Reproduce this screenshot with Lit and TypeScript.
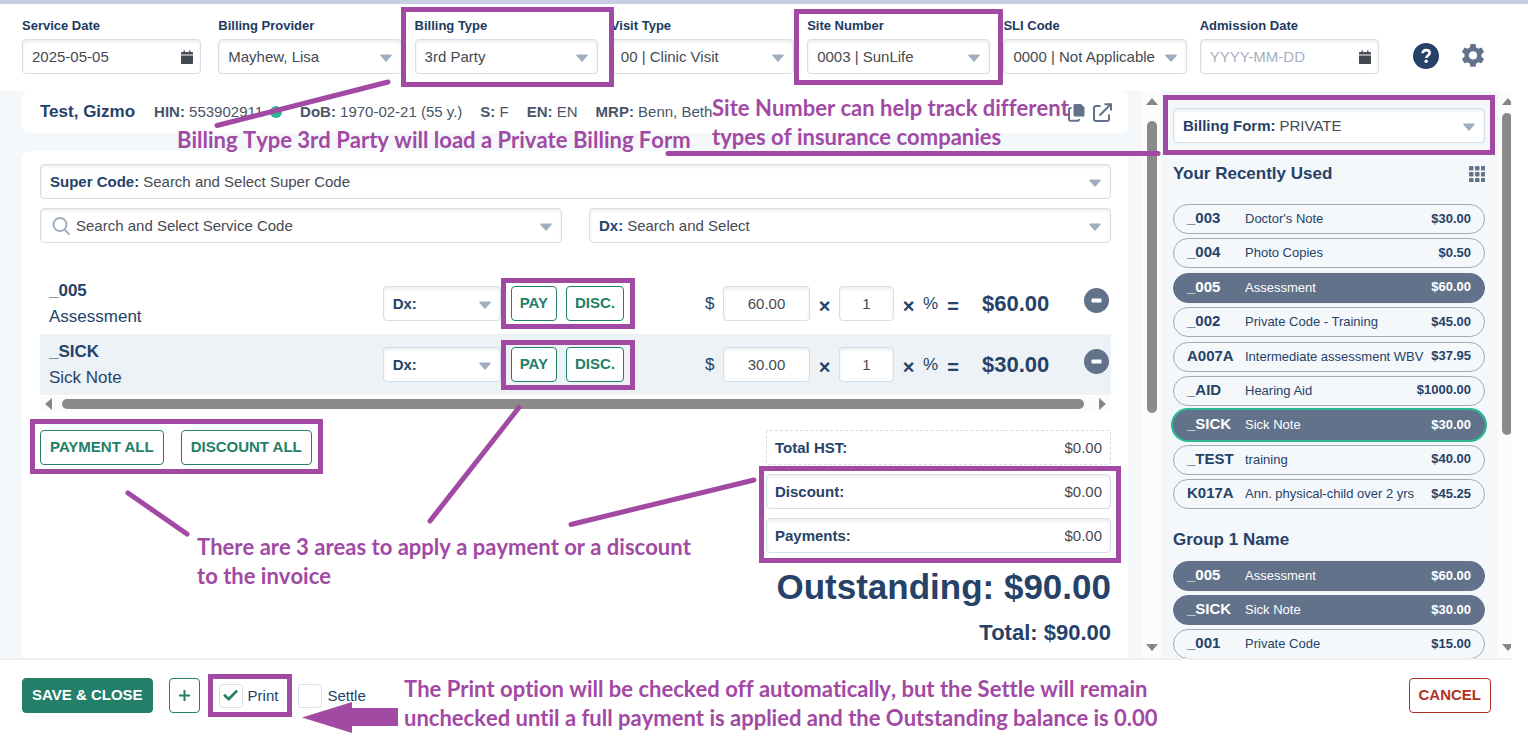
import { LitElement, html, css, svg } from "lit";
import { customElement, property } from "lit/decorators.js";
import { classMap } from "lit/directives/class-map.js";

const caret = html`<svg class="caret" viewBox="0 0 12 8" width="12" height="8" aria-hidden="true">
  <path d="M1 .5h10c.8 0 1.100.8.6 1.300L6.800 7.300c-.5.5-1.100.5-1.600 0L.4 1.800C-.1 1.300.2.500 1 .5z" fill="#a0aec0" />
</svg>`;

const calendar = html`<svg class="calendar" viewBox="0 0 12 14" width="12" height="14" aria-hidden="true">
  <path d="M2.500.5h1.500v1.500h4V.5h1.500v1.500H11c.6 0 1 .4 1 1v1.500H0V3c0-.6.4-1 1-1h1.500z" fill="#4a5058" />
  <path d="M0 5.500h12V13c0 .5-.4 1-1 1H1c-.6 0-1-.5-1-1z" fill="#42484f" />
</svg>`;

const control = css`
  * {
    box-sizing: border-box;
  }
  button,
  input,
  select {
    font: inherit;
    color: inherit;
    margin: 0;
  }
  .box {
    display: flex;
    align-items: center;
    gap: 4px;
    height: 35px;
    padding: 0 9px;
    background: #fff;
    border: 1px solid #d5dde7;
    border-radius: 4px;
    box-shadow: inset 0 2px 3px rgba(45, 55, 72, 0.09);
    color: #464a52;
    font-size: 15px;
    min-width: 0;
  }
  .box b,
  .box label {
    color: #264268;
    font-weight: 700;
    flex: none;
  }
  .box select,
  .box input {
    flex: 1;
    min-width: 0;
    width: 100%;
    height: 100%;
    padding: 0;
    border: 0;
    outline: 0;
    background: none;
    appearance: none;
  }
  .box input::placeholder {
    color: #a3afc0;
    opacity: 1;
  }
  .caret,
  .calendar {
    flex: none;
  }
  .caret {
    margin: 3px 0 0;
  }
`;

@customElement("header-field")
class HeaderField extends LitElement {
  @property() label = "";
  @property() value = "";
  @property() kind = "select";

  static styles = [
    control,
    css`
      :host {
        display: block;
        min-width: 0;
      }
      .name {
        display: block;
        font-size: 13px;
        font-weight: 700;
        line-height: 16px;
        margin-bottom: 5px;
        white-space: nowrap;
        color: #203a61;
      }
      .date {
        margin-right: 4px;
      }
      .date .calendar {
        margin-right: -2px;
      }
    `,
  ];

  render() {
    const date = this.kind === "date";
    return html`
      <label class="name" for="f">${this.label}</label>
      <div class=${classMap({ box: true, date })}>
        ${date
          ? html`<input id="f" type="text" placeholder="YYYY-MM-DD" .value=${this.value} />${calendar}`
          : html`<select id="f"><option>${this.value}</option></select>${caret}`}
      </div>
    `;
  }
}

@customElement("scroll-rail")
class ScrollRail extends LitElement {
  @property({ reflect: true }) axis = "y";
  @property({ type: Number }) size = 50;

  static styles = css`
    :host {
      display: flex;
      flex-direction: column;
      align-items: center;
      background: #fcfcfc;
      padding: 7px 4px;
      gap: 16px;
      box-sizing: border-box;
      overflow: hidden;
    }
    :host(.outer) {
      align-items: flex-start;
      gap: 8px;
    }
    :host([axis="x"]) {
      flex-direction: row;
      padding: 3px 5px;
      gap: 10px;
    }
    .track {
      flex: 1;
      width: 10px;
      min-height: 0;
    }
    :host([axis="x"]) .track {
      height: 10px;
      width: auto;
    }
    .thumb {
      background: #8a8a8a;
      border-radius: 5px;
      height: 100%;
      width: 100%;
    }
    svg {
      flex: none;
    }
  `;

  render() {
    const x = this.axis === "x";
    return html`
      <svg width=${x ? 7 : 12} height=${x ? 12 : 7} viewBox=${x ? "0 0 7 12" : "0 0 12 7"}>
        <path d=${x ? "M7 0v12L0 6z" : "M0 7h12L6 0z"} fill="#868686" />
      </svg>
      <div class="track">
        <div class="thumb" style=${x ? `width:${this.size}%` : `height:${this.size}%`}></div>
      </div>
      <svg width=${x ? 7 : 12} height=${x ? 12 : 7} viewBox=${x ? "0 0 7 12" : "0 0 12 7"}>
        <path d=${x ? "M0 0v12L7 6z" : "M0 0h12L6 7z"} fill="#868686" />
      </svg>
    `;
  }
}

interface Code {
  code: string;
  name: string;
  price: string;
  on?: boolean;
  focus?: boolean;
}

const recent: Code[] = [
  { code: "_003", name: "Doctor's Note", price: "$30.00" },
  { code: "_004", name: "Photo Copies", price: "$0.50" },
  { code: "_005", name: "Assessment", price: "$60.00", on: true },
  { code: "_002", name: "Private Code - Training", price: "$45.00" },
  { code: "A007A", name: "Intermediate assessment WBV", price: "$37.95" },
  { code: "_AID", name: "Hearing Aid", price: "$1000.00" },
  { code: "_SICK", name: "Sick Note", price: "$30.00", on: true, focus: true },
  { code: "_TEST", name: "training", price: "$40.00" },
  { code: "K017A", name: "Ann. physical-child over 2 yrs", price: "$45.25" },
];

const group: Code[] = [
  { code: "_005", name: "Assessment", price: "$60.00", on: true },
  { code: "_SICK", name: "Sick Note", price: "$30.00", on: true },
  { code: "_001", name: "Private Code", price: "$15.00" },
];

const lines = [
  { code: "_005", name: "Assessment", fee: "60.00", total: "$60.00" },
  { code: "_SICK", name: "Sick Note", fee: "30.00", total: "$30.00" },
];

@customElement("code-list")
class CodeList extends LitElement {
  @property({ attribute: false }) codes: Code[] = [];

  static styles = css`
    :host {
      display: flex;
      flex-direction: column;
      justify-content: space-between;
      gap: 4px;
    }
    .pill {
      display: grid;
      grid-template-columns: 58px 1fr auto;
      align-items: center;
      height: 30px;
      flex: none;
      box-sizing: border-box;
      padding: 0 13px;
      border: 1px solid #a2aab9;
      border-radius: 15px;
      background: none;
      color: #264268;
      font: 13px/16px "Liberation Sans", Arial, sans-serif;
      text-align: left;
      white-space: nowrap;
    }
    .code {
      font-size: 15px;
      line-height: 20px;
      font-weight: 700;
      padding-bottom: 2px;
    }
    .price {
      font-size: 13px;
      font-weight: 700;
      padding-bottom: 1px;
    }
    .on {
      background: #62728a;
      border-color: #62728a;
      color: #fff;
    }
    .focus {
      box-shadow: 0 0 0 2px #2bb892;
    }
  `;

  render() {
    return this.codes.map(
      (c) => html`<button class=${classMap({ pill: true, on: !!c.on, focus: !!c.focus })}>
        <span class="code">${c.code}</span><span>${c.name}</span><span class="price">${c.price}</span>
      </button>`
    );
  }
}

@customElement("note-layer")
class NoteLayer extends LitElement {
  static styles = css`
    :host {
      position: absolute;
      inset: 0;
      overflow: hidden;
      pointer-events: none;
      color: #a249a4;
      font: 700 22px/29px Lato, "Open Sans", sans-serif;
      font-variant-ligatures: none;
      font-kerning: none;
    }
    svg {
      position: absolute;
      left: 0;
      top: 0;
    }
    p {
      position: absolute;
      margin: 0;
      white-space: nowrap;
    }
    .type {
      left: 177px;
      top: 125px;
    }
    .site {
      left: 712px;
      top: 93px;
    }
    .areas {
      left: 197px;
      top: 532px;
    }
    .print {
      left: 404px;
      top: 674px;
    }
  `;

  render() {
    const frames = [
      [401, 7, 213, 80],
      [794, 9, 209, 76],
      [1163, 95, 332, 60],
      [501, 278, 134, 51],
      [501, 340, 134, 50],
      [30, 419, 293, 55],
      [759, 466, 362, 97],
      [208, 674, 84, 43],
    ];
    return html`
      <svg width="1528" height="749" viewBox="0 0 1528 749" fill="none" stroke="#a249a4" stroke-width="5">
        ${frames.map(([x, y, w, h]) => svg`<rect x=${x + 2.5} y=${y + 2.5} width=${w - 5} height=${h - 5} />`)}
        <path
          stroke-linecap="round"
          d="M217 125.500 388 82M668 153.500H1158M128 493l59 41M519 407.500 430 521M571 524.500 754 480"
        />
        <path stroke="none" fill="#a249a4" d="M302 717.500 352 702v6h46v18h-46v7z" />
      </svg>
      <p class="type">Billing Type 3rd Party will load a Private Billing Form</p>
      <p class="site">Site Number can help track different<br />types of insurance companies</p>
      <p class="areas">There are 3 areas to apply a payment or a discount<br />to the invoice</p>
      <p class="print">
        The Print option will be checked off automatically, but the Settle will remain<br />unchecked until a full
        payment is applied and the Outstanding balance is 0.00
      </p>
    `;
  }
}

@customElement("app-root")
class AppRoot extends LitElement {
  static styles = [
    control,
    css`
      :host {
        position: relative;
        display: grid;
        grid-template-rows: auto minmax(0, 1fr) auto;
        height: 100vh;
        padding-right: 17px;
        box-sizing: border-box;
        overflow: hidden;
        background: #fff;
        color: #264268;
        font: 15px/20px "Liberation Sans", Arial, sans-serif;
      }
      .strip {
        height: 4px;
        margin-right: -17px;
        background: #c6cfe1;
      }
      header {
        display: flex;
        align-items: flex-start;
        padding: 14px 25px 17px 22px;
      }
      .fields {
        flex: 1;
        display: grid;
        grid-template-columns: repeat(7, minmax(0, 1fr));
        gap: 13px;
      }
      .icon {
        padding: 0;
        border: 0;
        background: none;
        display: grid;
        place-items: center;
      }
      header .icon {
        width: 26px;
        height: 26px;
        margin: 25px 0 0 21px;
      }
      header .help {
        margin-left: 30px;
      }
      main {
        display: grid;
        grid-template-columns: minmax(0, 1fr) 19px 337px 13px;
        grid-template-rows: minmax(0, 1fr);
        background: #f4f8fb;
      }
      .work {
        display: flex;
        flex-direction: column;
        gap: 18px;
        padding: 0 14px 0 22px;
        min-height: 0;
      }
      .patient {
        display: flex;
        align-items: center;
        height: 42px;
        flex: none;
        padding: 0 16px 0 18px;
        background: #fff;
        border-radius: 8px;
        color: #4a5568;
        white-space: nowrap;
      }
      .patient h1 {
        margin: 0 19px 0 0;
        font-size: 17px;
        color: #264268;
      }
      .patient span {
        margin-right: 18px;
      }
      .patient .id {
        margin-right: 7px;
      }
      .dot {
        width: 12px;
        height: 12px;
        border-radius: 50%;
        background: #2bb892;
        margin-right: 18px;
      }
      .patient .icon {
        margin-left: 8px;
      }
      .patient .copy {
        margin-left: auto;
      }
      .card {
        flex: 1;
        min-height: 0;
        overflow: hidden;
        background: #fff;
        border-radius: 8px 8px 0 0;
        padding: 13px 17px 0 18px;
      }
      .pair {
        display: grid;
        grid-template-columns: 1fr 1fr;
        gap: 27px;
        margin: 9px 0 30px;
      }
      .line {
        display: flex;
        align-items: center;
        height: 61px;
        padding-left: 9px;
        white-space: nowrap;
      }
      .line.alt {
        background: #edf2f6;
      }
      .what {
        flex: 1;
        font-size: 17px;
        line-height: 26px;
      }
      .what b {
        display: block;
      }
      .dx {
        width: 118px;
        margin-right: 10px;
      }
      .btn {
        height: 35px;
        padding: 0 9px 2px;
        border: 1px solid #237f68;
        border-radius: 4px;
        background: #fff;
        color: #237f68;
        font-weight: 700;
        font-size: 15px;
      }
      .line .btn {
        margin-right: 9px;
        padding: 0 8px 2px;
      }
      .math {
        display: grid;
        grid-template-columns: 18px 87px 29px 55px 29px 17px 26px 83px 62px;
        align-items: center;
        margin-left: 72px;
        font-size: 17px;
      }
      .math .box {
        padding: 0;
      }
      .math input {
        text-align: center;
      }
      .math .op {
        text-align: center;
        font-size: 20px;
        font-weight: 700;
        padding-top: 4px;
      }
      .math .sum {
        font-size: 22px;
        font-weight: 700;
        padding-left: 16px;
      }
      .math .icon {
        justify-self: end;
        margin: 0 2px 6px 0;
      }
      .bottom {
        display: grid;
        grid-template-columns: minmax(0, 1fr) 345px;
        align-items: start;
        margin-top: 17px;
      }
      .all {
        display: flex;
        gap: 17px;
      }
      .totals {
        display: grid;
        gap: 9px;
        justify-items: stretch;
      }
      .totals .box {
        justify-content: space-between;
        padding: 0 8px;
      }
      .totals .plain {
        border-style: dashed;
        box-shadow: none;
      }
      .totals input {
        text-align: right;
      }
      .due {
        margin: 12px 0 0;
        text-align: right;
        font-size: 35px;
        font-weight: 700;
        line-height: 44px;
        white-space: nowrap;
      }
      .total {
        margin: 12px 0 0;
        text-align: right;
        font-size: 22px;
        font-weight: 700;
        line-height: 24px;
      }
      aside {
        padding: 17px 13px 0 12px;
        min-height: 0;
        overflow: hidden;
      }
      aside h2 {
        display: flex;
        justify-content: space-between;
        align-items: center;
        margin: 20px 0 19px;
        font-size: 17px;
        line-height: 22px;
      }
      .recent {
        min-height: 305px;
      }
      aside h2.group {
        margin: 20px 0 10px;
      }
      footer {
        display: flex;
        align-items: center;
        height: 91px;
        padding: 0 20px 18px 22px;
        border-top: 2px solid #eef1f4;
      }
      footer .save {
        background: #237f68;
        color: #fff;
        margin-right: 16px;
      }
      footer .add {
        width: 31px;
        padding: 0;
        display: grid;
        place-items: center;
        margin-right: 19px;
      }
      .check {
        display: flex;
        align-items: center;
        gap: 5px;
        margin-right: 20px;
      }
      .check input {
        appearance: none;
        width: 24px;
        height: 24px;
        border: 1px solid #d9e0ea;
        border-radius: 3px;
        display: grid;
        place-items: center;
      }
      .check input:checked::before {
        content: "";
        width: 15px;
        height: 12px;
        background: #237f68;
        clip-path: polygon(0 52%, 13% 36%, 36% 64%, 87% 2%, 100% 16%, 38% 96%);
      }
      footer .cancel {
        margin-left: auto;
        color: #b2301f;
        border-color: #b2301f;
      }
    `,
  ];

  private minus = html`<svg width="25" height="25" viewBox="0 0 25 25" aria-hidden="true">
    <circle cx="12.500" cy="12.500" r="12.500" fill="#62728a" />
    <rect x="7.500" y="10.500" width="10" height="4" rx="1" fill="#fff" />
  </svg>`;

  private row(l: (typeof lines)[number], alt: boolean) {
    return html`<div class=${classMap({ line: true, alt })}>
      <div class="what"><b>${l.code}</b>${l.name}</div>
      <div class="box dx">
        <label for="dx${l.code}">Dx:</label><select id="dx${l.code}"><option></option></select>${caret}
      </div>
      <button class="btn">PAY</button>
      <button class="btn">DISC.</button>
      <div class="math">
        <span>$</span>
        <div class="box"><input aria-label="Fee" .value=${l.fee} /></div>
        <span class="op">×</span>
        <div class="box"><input aria-label="Units" value="1" /></div>
        <span class="op">×</span>
        <span>%</span>
        <span class="op">=</span>
        <span class="sum">${l.total}</span>
        <button class="icon" aria-label="Remove">${this.minus}</button>
      </div>
    </div>`;
  }

  render() {
    return html`
      <div>
        <div class="strip"></div>
        <header>
          <div class="fields">
            <header-field label="Service Date" kind="date" value="2025-05-05"></header-field>
            <header-field label="Billing Provider" value="Mayhew, Lisa"></header-field>
            <header-field label="Billing Type" value="3rd Party"></header-field>
            <header-field label="Visit Type" value="00 | Clinic Visit"></header-field>
            <header-field label="Site Number" value="0003 | SunLife"></header-field>
            <header-field label="SLI Code" value="0000 | Not Applicable"></header-field>
            <header-field label="Admission Date" kind="date"></header-field>
          </div>
          <button class="icon help" aria-label="Help">
            <svg width="26" height="26" viewBox="0 0 26 26">
              <circle cx="13" cy="13" r="13" fill="#264268" />
              <path
                d="M9.600 10.300c0-2 1.500-3.200 3.500-3.200s3.600 1.200 3.600 3c0 2.300-3.400 2.400-3.400 4.800"
                fill="none"
                stroke="#fff"
                stroke-width="2.600"
              />
              <circle cx="13.200" cy="18.200" r="1.700" fill="#fff" />
            </svg>
          </button>
          <button class="icon" aria-label="Settings">
            <svg width="26" height="26" viewBox="0 0 24 24">
              <path
                fill="#62728a"
                fill-rule="evenodd"
                d="M9.700 1h4.600l.6 3.100c.7.300 1.400.7 2 1.100l3-1 2.300 4-2.400 2.100c.1.800.1 1.600 0 2.400l2.400 2.100-2.300 4-3-1c-.6.500-1.300.9-2 1.100l-.6 3.100H9.700l-.6-3.100c-.7-.3-1.400-.6-2-1.100l-3 1-2.300-4 2.400-2.100c-.1-.8-.1-1.600 0-2.400L1.800 8.200l2.300-4 3 1c.6-.5 1.300-.8 2-1.100zM12 7.700a3.800 3.800 0 1 0 0 7.600 3.800 3.800 0 0 0 0-7.600z"
              />
            </svg>
          </button>
        </header>
      </div>
      <main>
        <section class="work">
          <div class="patient">
            <h1>Test, Gizmo</h1>
            <span class="id"><b>HIN:</b> 553902911</span>
            <i class="dot"></i>
            <span><b>DoB:</b> 1970-02-21 (55 y.)</span>
            <span><b>S:</b> F</span>
            <span><b>EN:</b> EN</span>
            <span><b>MRP:</b> Benn, Beth</span>
            <button class="icon copy" aria-label="Copy">
              <svg width="17" height="19" viewBox="0 0 17 19">
                <path d="M7 1h6l3.500 3.500V12c0 .8-.5 1.500-1.500 1.500H7c-.8 0-1.500-.7-1.500-1.500V2.500C5.500 1.700 6.200 1 7 1z" fill="#62728a" />
                <path d="M3.500 5H2.300C1.600 5 1 5.600 1 6.300v10c0 .8.600 1.400 1.300 1.400h7.400c.7 0 1.300-.6 1.300-1.300V16" fill="none" stroke="#62728a" stroke-width="2" />
              </svg>
            </button>
            <button class="icon" aria-label="Open in new window">
              <svg width="19" height="19" viewBox="0 0 19 19" fill="none" stroke="#62728a" stroke-width="2">
                <path d="M7.500 3H3C1.900 3 1 3.900 1 5v11c0 1.100.9 2 2 2h11c1.100 0 2-.9 2-2v-4.500M11.500 1.200H18V7.500M17.500 1.500 6.500 12.500" />
              </svg>
            </button>
          </div>
          <div class="card">
            <div class="box">
              <label for="super">Super Code:</label>
              <select id="super"><option>Search and Select Super Code</option></select>${caret}
            </div>
            <div class="pair">
              <div class="box">
                <svg width="22" height="20" viewBox="0 0 22 20" fill="none" stroke="#a0aec0" stroke-width="2">
                  <circle cx="10" cy="8.500" r="6.500" />
                  <path d="m14.500 13.500 5 5" />
                </svg>
                <select aria-label="Service code"><option>Search and Select Service Code</option></select>${caret}
              </div>
              <div class="box">
                <label for="dx">Dx:</label>
                <select id="dx"><option>Search and Select</option></select>${caret}
              </div>
            </div>
            ${lines.map((l, i) => this.row(l, i % 2 === 1))}
            <scroll-rail axis="x" size="99.5"></scroll-rail>
            <div class="bottom">
              <div class="all">
                <button class="btn">PAYMENT ALL</button>
                <button class="btn">DISCOUNT ALL</button>
              </div>
              <div>
                <div class="totals">
                  <div class="box plain"><b>Total HST:</b><span>$0.00</span></div>
                  <div class="box"><label for="disc">Discount:</label><input id="disc" value="$0.00" /></div>
                  <div class="box"><label for="paid">Payments:</label><input id="paid" value="$0.00" /></div>
                </div>
                <p class="due">Outstanding: $90.00</p>
                <p class="total">Total: $90.00</p>
              </div>
            </div>
          </div>
        </section>
        <scroll-rail size="57.5"></scroll-rail>
        <aside>
          <div class="box">
            <label for="form">Billing Form:</label>
            <select id="form"><option>PRIVATE</option></select>${caret}
          </div>
          <h2>
            Your Recently Used
            <svg width="16" height="16" viewBox="0 0 16 16" fill="#62728a">
              ${[0, 6, 12].map((y) => [0, 6, 12].map((x) => svg`<rect x=${x} y=${y} width="4.500" height="4.500" rx="1" />`))}
            </svg>
          </h2>
          <code-list class="recent" .codes=${recent}></code-list>
          <h2 class="group">Group 1 Name</h2>
          <code-list .codes=${group}></code-list>
        </aside>
        <scroll-rail class="outer" size="61.5"></scroll-rail>
      </main>
      <footer>
        <button class="btn save">SAVE &amp; CLOSE</button>
        <button class="btn add" aria-label="Add">
          <svg width="13" height="13" viewBox="0 0 13 13"><path d="M6.500 1v11M1 6.500h11" stroke="#237f68" stroke-width="2" /></svg>
        </button>
        <label class="check"><input type="checkbox" checked />Print</label>
        <label class="check"><input type="checkbox" />Settle</label>
        <button class="btn cancel">CANCEL</button>
      </footer>
      <note-layer></note-layer>
    `;
  }
}
